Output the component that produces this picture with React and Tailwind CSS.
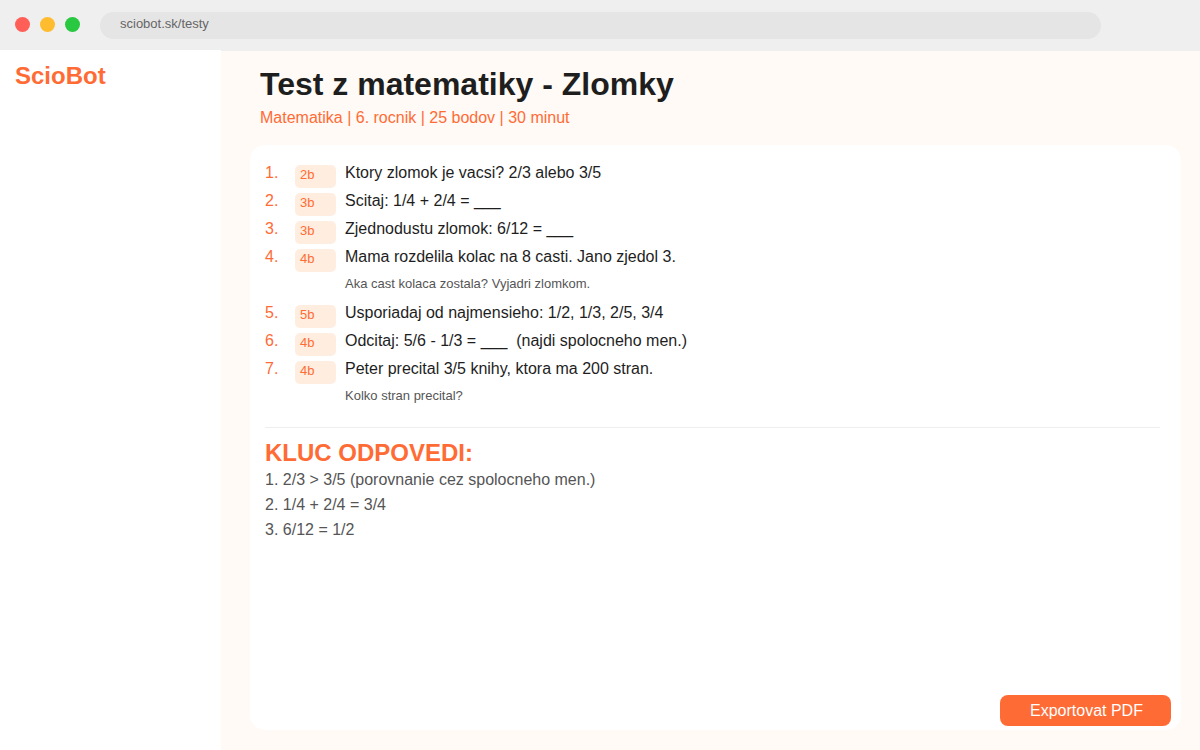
import React from "react";

const questions = [
  { points: 2, text: "Ktory zlomok je vacsi? 2/3 alebo 3/5" },
  { points: 3, text: "Scitaj: 1/4 + 2/4 = ___" },
  { points: 3, text: "Zjednodustu zlomok: 6/12 = ___" },
  {
    points: 4,
    text: "Mama rozdelila kolac na 8 casti. Jano zjedol 3.",
    note: "Aka cast kolaca zostala? Vyjadri zlomkom."
  },
  { points: 5, text: "Usporiadaj od najmensieho: 1/2, 1/3, 2/5, 3/4" },
  { points: 4, text: "Odcitaj: 5/6 - 1/3 = ___  (najdi spolocneho men.)" },
  {
    points: 4,
    text: "Peter precital 3/5 knihy, ktora ma 200 stran.",
    note: "Kolko stran precital?"
  }
];

const answers = [
  "2/3 > 3/5 (porovnanie cez spolocneho men.)",
  "1/4 + 2/4 = 3/4",
  "6/12 = 1/2"
];

const BrowserBar = () => (
  <header className="flex h-[50px] shrink-0 items-center bg-[#efefef] pl-[15px] pr-[99px]">
    <div className="flex w-[85px] shrink-0 gap-2.5 pb-0.5">
      <span className="size-[15px] rounded-full bg-[#ff5f57]" />
      <span className="size-[15px] rounded-full bg-[#febc2e]" />
      <span className="size-[15px] rounded-full bg-[#28c840]" />
    </div>
    <input
      type="text"
      aria-label="Adresa"
      defaultValue="sciobot.sk/testy"
      className="h-[27px] min-w-0 flex-1 rounded-full bg-[#e5e5e5] px-5 pb-1 text-[13px] text-[#666666] outline-none"
    />
  </header>
);

const Question = ({ number, question }) => (
  <li className="flex">
    <span className="w-[30px] shrink-0 leading-6 text-[#ff6b35]">{number}.</span>
    <span className="mt-1 h-[23px] w-[41px] shrink-0 rounded-[5px] bg-[#ffeee0] pl-[5px] text-[13px] leading-5 text-[#ff6b35]">
      {question.points}b
    </span>
    <div className="ml-[9px]">
      <p className="h-7 whitespace-pre leading-6">{question.text}</p>
      {question.note && (
        <p className="h-7 text-[13px] leading-[22px] text-[#555555]">{question.note}</p>
      )}
    </div>
  </li>
);

const App = () => {
  return (
    <div className="flex min-h-screen flex-col bg-[#fffaf5] font-['Liberation_Sans',Arial,sans-serif] text-base text-[#1e1e1e]">
      <BrowserBar />

      <div className="flex flex-1">
        {/* Sidebar */}
        <aside className="w-[221px] shrink-0 bg-white px-[15px] pt-3">
          <p className="text-2xl leading-7 font-bold text-[#ff6b35]">ScioBot</p>
        </aside>

        <main className="flex min-w-0 flex-1 flex-col border-t border-[#efefef] pt-3 pr-[19px] pb-5 pl-[29px]">
          <div className="px-2.5 pb-3.5">
            <h1 className="text-[32px] leading-[42px] font-bold">
              Test z matematiky - Zlomky
            </h1>
            <p className="leading-[26px] text-[#ff6b35]">
              Matematika | 6. rocnik | 25 bodov | 30 minut
            </p>
          </div>

          <section className="flex flex-1 flex-col rounded-[15px] bg-white pt-4">
            <div className="pr-[21px] pl-[15px]">
              {/* Questions */}
              <ol>
                {questions.map((q, i) => (
                  <Question key={i} number={i + 1} question={q} />
                ))}
              </ol>

              <hr className="mt-3.5 border-[#eeeeee]" />

              {/* Answer key */}
              <h2 className="mt-[11px] text-2xl leading-7 font-bold text-[#ff6b35]">
                KLUC ODPOVEDI:
              </h2>
              <ol className="leading-[25px] text-[#555555]">
                {answers.map((a, i) => (
                  <li key={i}>
                    {i + 1}. {a}
                  </li>
                ))}
              </ol>
            </div>

            <div className="mt-auto flex justify-end pr-2.5 pb-1">
              <button
                type="button"
                className="h-[31px] w-[171px] rounded-lg bg-[#ff6b35] pl-[30px] text-left text-white"
              >
                Exportovat PDF
              </button>
            </div>
          </section>
        </main>
      </div>
    </div>
  );
};

export default App;
